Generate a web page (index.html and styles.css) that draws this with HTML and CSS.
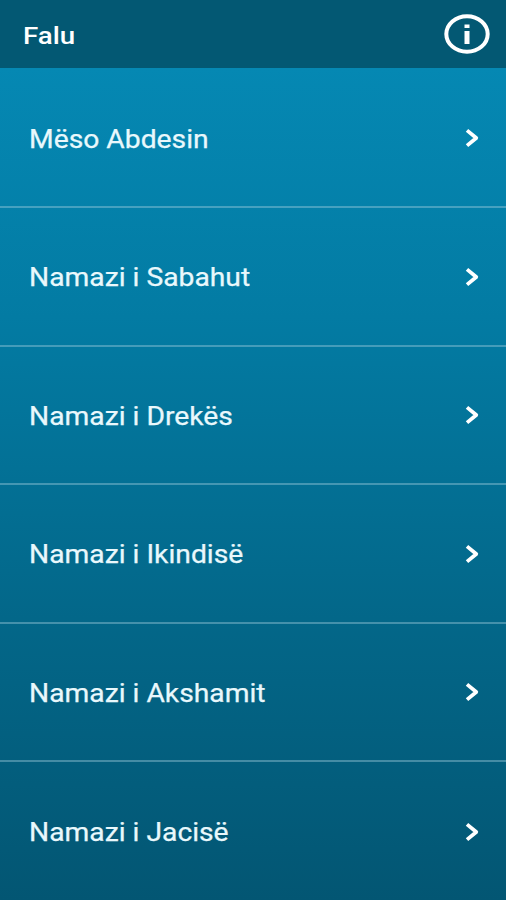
FILE: index.html
```html
<!DOCTYPE html>
<html lang="sq">
<head>
<meta charset="utf-8">
<title>Falu</title>
<link rel="stylesheet" href="styles.css">
</head>
<body>
<header class="bar">
  <h1 class="title"><span class="label">Falu</span></h1>
  <svg class="info" viewBox="0 0 46 40"><ellipse cx="23" cy="20" rx="20.700" ry="17.800" fill="none" stroke="#fff" stroke-width="4"/><path d="M20.500 10.500h5v3.500h-5zM20.500 17h5v13h-5z" fill="#fff"/></svg>
</header>
<main class="list">
  <a class="row"><span class="label">Mëso Abdesin</span><svg class="chevron" viewBox="0 0 16 20"><path d="M3 2.300l9.300 7.700-9.300 7.700"/></svg></a>
  <a class="row"><span class="label">Namazi i Sabahut</span><svg class="chevron" viewBox="0 0 16 20"><path d="M3 2.300l9.300 7.700-9.300 7.700"/></svg></a>
  <a class="row"><span class="label">Namazi i Drekës</span><svg class="chevron" viewBox="0 0 16 20"><path d="M3 2.300l9.300 7.700-9.300 7.700"/></svg></a>
  <a class="row"><span class="label">Namazi i Ikindisë</span><svg class="chevron" viewBox="0 0 16 20"><path d="M3 2.300l9.300 7.700-9.300 7.700"/></svg></a>
  <a class="row"><span class="label">Namazi i Akshamit</span><svg class="chevron" viewBox="0 0 16 20"><path d="M3 2.300l9.300 7.700-9.300 7.700"/></svg></a>
  <a class="row"><span class="label">Namazi i Jacisë</span><svg class="chevron" viewBox="0 0 16 20"><path d="M3 2.300l9.300 7.700-9.300 7.700"/></svg></a>
</main>
</body>
</html>
```
FILE: styles.css
```css
* { box-sizing: border-box; }
body { margin: 0; height: 900px; overflow: hidden; display: flex; flex-direction: column; font-family: Roboto, sans-serif; color: #e9f8fc; background: #035673; }
.bar { height: 68px; flex: none; display: flex; align-items: center; justify-content: space-between; padding: 0 16px 0 23px; background: #035873; }
.title { margin: 0; padding-top: 3px; font-size: 24.500px; font-weight: 500; line-height: 30px; color: #fff; }
.info { width: 46px; height: 40px; }
.list { height: 832px; flex: none; padding-top: 1.600px; background: linear-gradient(#0588b3, #037ba3 30%, #036789 66%, #035673); }
.row { height: 138.500px; display: flex; align-items: center; justify-content: space-between; padding: 1px 26px 0 29px; border-bottom: 2px solid rgba(170, 210, 224, .4); font-size: 25px; }
.row:last-child { border-bottom: 0; }
.label { display: inline-block; transform: scaleX(1.13); transform-origin: left; white-space: nowrap; }
.row .label { line-height: 30px; padding-top: 3px; -webkit-text-stroke: .25px #e9f8fc; }
.chevron { width: 16px; height: 20px; fill: none; stroke: #fff; stroke-width: 3.700; stroke-linejoin: round; }
```
